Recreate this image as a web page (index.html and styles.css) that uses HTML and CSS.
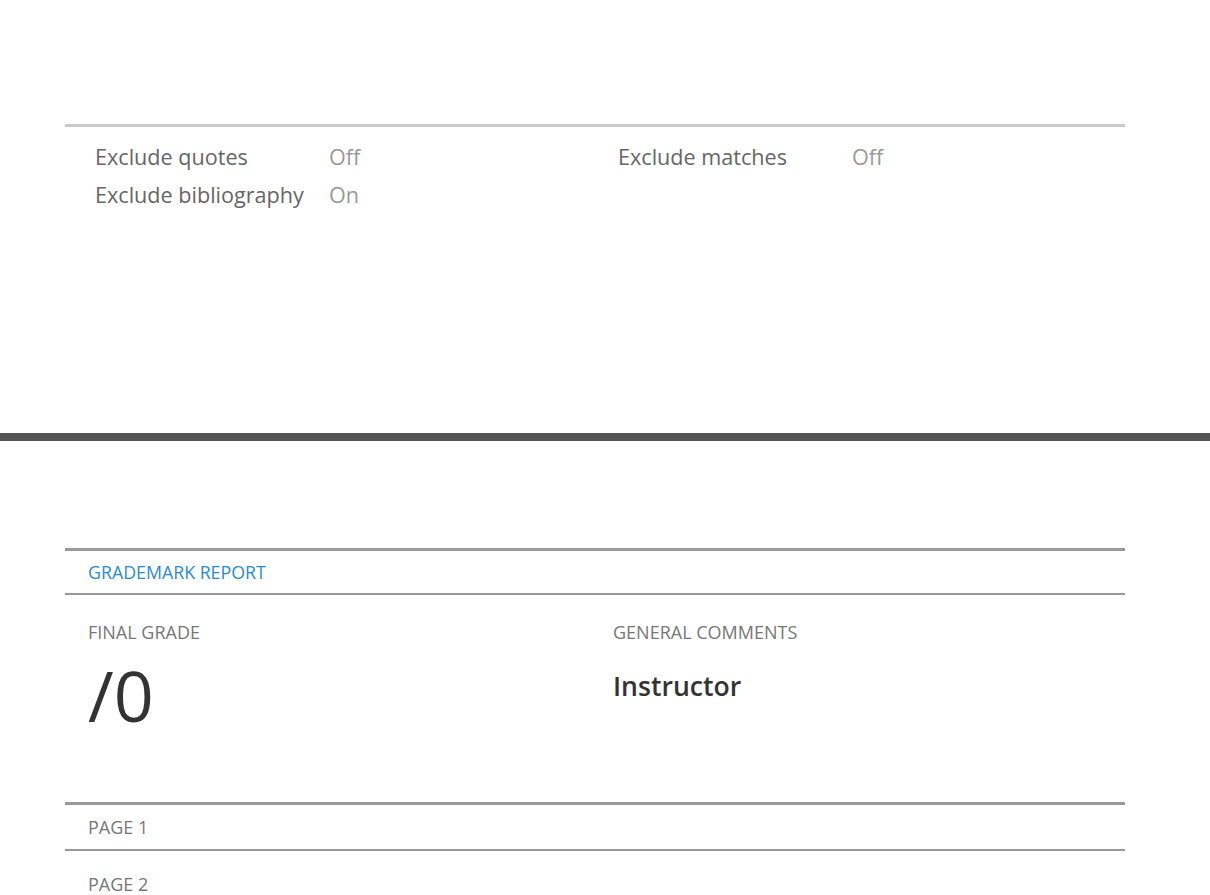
FILE: index.html
```html
<!DOCTYPE html>
<html>
<head>
<meta charset="utf-8">
<link rel="stylesheet" href="styles.css">
</head>
<body>
<div class="page">
  <section class="settings">
    <div class="settings-grid">
      <div class="s-label">Exclude quotes</div>
      <div class="s-value">Off</div>
      <div class="s-label">Exclude matches</div>
      <div class="s-value">Off</div>
      <div class="s-label">Exclude bibliography</div>
      <div class="s-value">On</div>
    </div>
  </section>
  <div class="divider"></div>
  <section class="report">
    <div class="report-head">GRADEMARK REPORT</div>
    <div class="grade-row">
      <div class="grade-col">
        <div class="col-label">FINAL GRADE</div>
        <div class="grade-value">/0</div>
      </div>
      <div class="comment-col">
        <div class="col-label">GENERAL COMMENTS</div>
        <div class="comment-author">Instructor</div>
      </div>
    </div>
    <div class="page-item page-item-first">PAGE 1</div>
    <div class="page-item page-item-next">PAGE 2</div>
  </section>
</div>
</body>
</html>
```
FILE: styles.css
```css
html, body {
  margin: 0;
  padding: 0;
  background: #fff;
  font-family: "Open Sans", "Liberation Sans", sans-serif;
  overflow: hidden;
}
.page {
  width: 1210px;
  height: 895px;
  overflow: hidden;
}
.settings {
  height: 433px;
  box-sizing: border-box;
  padding: 124px 85px 0 65px;
}
.settings-grid {
  border-top: 3px solid #c9c9c9;
  padding: 11px 0 0 30px;
  display: grid;
  grid-template-columns: 234px 289px 234px auto;
  font-size: 21.6px;
  line-height: 38px;
}
.s-label {
  color: #666;
}
.s-value {
  color: #999;
}
.divider {
  height: 8px;
  background: #555;
}
.report {
  padding: 107px 85px 0 65px;
}
.report-head {
  border-top: 3px solid #999;
  border-bottom: 2px solid #999;
  height: 42px;
  line-height: 42px;
  padding-left: 23px;
  font-size: 17.8px;
  color: #2b8bd0;
}
.grade-row {
  height: 207px;
  box-sizing: border-box;
  padding: 25px 0 0 23px;
  display: grid;
  grid-template-columns: 525px auto;
}
.col-label {
  font-size: 18px;
  line-height: 24px;
  color: #777;
}
.grade-value {
  margin-top: 11px;
  font-size: 70px;
  line-height: 80px;
  color: #333;
}
.comment-author {
  margin-top: 24px;
  font-size: 26.6px;
  font-weight: 600;
  line-height: 36px;
  color: #333;
}
.page-item {
  padding-left: 23px;
  font-size: 18px;
  line-height: 22px;
  color: #777;
}
.page-item-first {
  border-top: 3px solid #999;
  padding-top: 11px;
  padding-bottom: 11px;
}
.page-item-next {
  border-top: 2px solid #999;
  padding-top: 22px;
}
```
